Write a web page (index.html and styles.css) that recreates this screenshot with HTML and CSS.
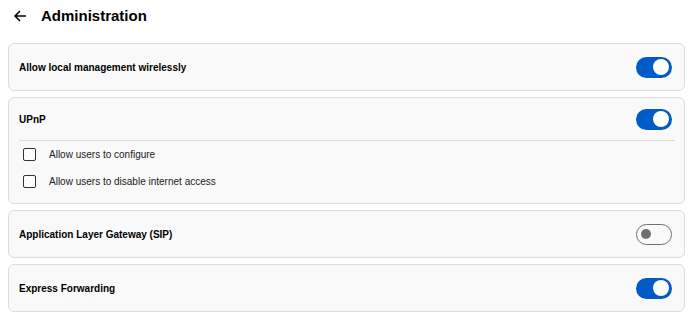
FILE: index.html
```html
<!DOCTYPE html>
<html>
<head>
    <title>Administration</title>
    <link rel="stylesheet" href="styles.css">
</head>
<body>
    <div class="page">
        <div class="header">
            <svg class="back" width="14" height="14" viewBox="0 0 14 14">
                <path d="M13 7H2M7 2L2 7L7 12" fill="none" stroke="#000" stroke-width="1.5"/>
            </svg>
            <h1>Administration</h1>
        </div>

        <div class="cards">
            <div class="card">
                <div class="row">
                    <span class="label">Allow local management wirelessly</span>
                    <span class="toggle on"><span class="knob"></span></span>
                </div>
            </div>

            <div class="card">
                <div class="row head">
                    <span class="label">UPnP</span>
                    <span class="toggle on"><span class="knob"></span></span>
                </div>
                <div class="divider"></div>
                <div class="options">
                    <label class="option"><span class="box"></span>Allow users to configure</label>
                    <label class="option"><span class="box"></span>Allow users to disable internet access</label>
                </div>
            </div>

            <div class="card">
                <div class="row">
                    <span class="label">Application Layer Gateway (SIP)</span>
                    <span class="toggle off"><span class="knob"></span></span>
                </div>
            </div>

            <div class="card">
                <div class="row">
                    <span class="label">Express Forwarding</span>
                    <span class="toggle on"><span class="knob"></span></span>
                </div>
            </div>
        </div>
    </div>
</body>
</html>
```

FILE: styles.css
```css
body {
    margin: 0;
    background-color: #fff;
    font-family: "Liberation Sans", Arial, sans-serif;
    color: #000;
}
.page {
    padding: 0 12px 0 8px;
}
.header {
    display: flex;
    align-items: center;
    height: 31px;
}
.back {
    margin-left: 5px;
}
.header h1 {
    margin: 0 0 0 14px;
    font-size: 15px;
    font-weight: bold;
}
.cards {
    display: flex;
    flex-direction: column;
    gap: 6px;
    margin-top: 12px;
}
.card {
    background-color: #f9f9f9;
    border: 1px solid #dcdcdc;
    border-radius: 6px;
}
.row {
    display: flex;
    align-items: center;
    justify-content: space-between;
    height: 46px;
    padding: 0 12px 0 10px;
}
.row.head {
    height: 42px;
}
.label {
    font-size: 10px;
    font-weight: bold;
}
.toggle {
    position: relative;
    width: 36px;
    height: 21px;
    border-radius: 11px;
    box-sizing: border-box;
}
.toggle.on {
    background-color: #005bc6;
}
.toggle.off {
    background-color: #f9f9f9;
    border: 1.5px solid #6f6f6f;
}
.knob {
    position: absolute;
    border-radius: 50%;
}
.toggle.on .knob {
    width: 16px;
    height: 16px;
    top: 2.5px;
    right: 3px;
    background-color: #fff;
}
.toggle.off .knob {
    width: 10px;
    height: 10px;
    top: 4px;
    left: 4px;
    background-color: #6f6f6f;
}
.divider {
    height: 1px;
    margin: 0 9px 0 10px;
    background-color: #dcdcdc;
}
.options {
    padding-bottom: 8px;
}
.option {
    display: flex;
    align-items: center;
    height: 27px;
    padding-left: 14px;
    font-size: 10px;
    color: #222;
}
.box {
    width: 13px;
    height: 13px;
    box-sizing: border-box;
    border: 1.5px solid #333;
    border-radius: 2px;
    margin-right: 13px;
    background-color: #fff;
}
```
